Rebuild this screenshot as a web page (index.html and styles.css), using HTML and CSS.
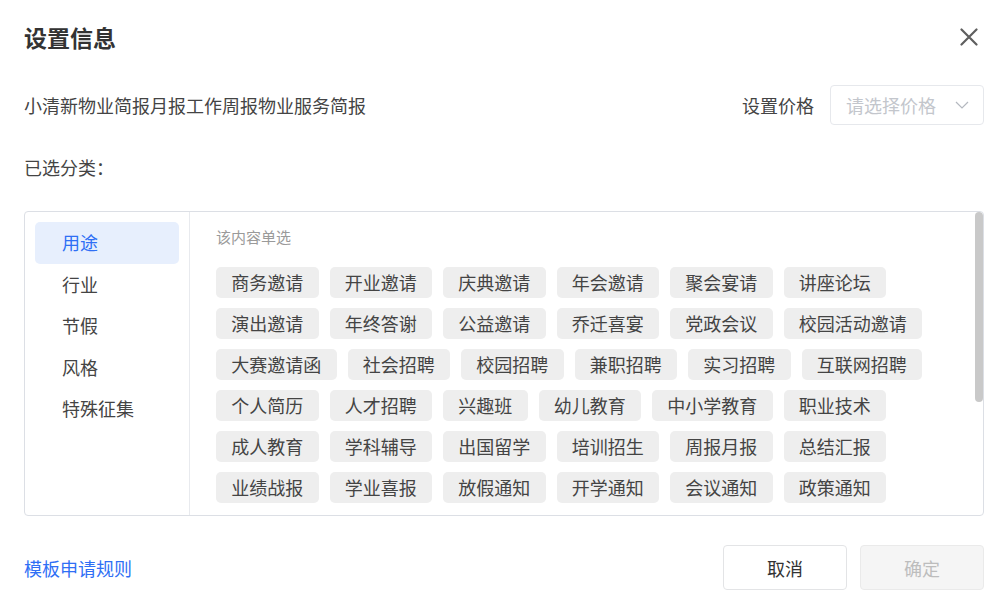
FILE: index.html
```html
<!DOCTYPE html>
<html lang="zh-CN">
<head>
    <meta charset="UTF-8">
    <meta name="viewport" content="width=device-width, initial-scale=1.0">
    <title>设置信息</title>
    <link rel="stylesheet" href="styles.css">
</head>
<body>
    <div class="dialog">
        <div class="dialog-header">
            <h2 class="dialog-title">设置信息</h2>
            <button class="close-btn" type="button" aria-label="关闭">
                <svg width="18" height="18" viewBox="0 0 18 18">
                    <path d="M1.5 1.5 L16.5 16.5 M16.5 1.5 L1.5 16.5" stroke="#5f5f5f" stroke-width="2.2" fill="none" stroke-linecap="round"/>
                </svg>
            </button>
        </div>

        <div class="info-row">
            <span class="template-name">小清新物业简报月报工作周报物业服务简报</span>
            <div class="price-field">
                <label class="price-label">设置价格</label>
                <div class="select">
                    <span class="select-placeholder">请选择价格</span>
                    <svg class="select-arrow" width="14" height="8" viewBox="0 0 14 8">
                        <path d="M1 1 L7 7 L13 1" stroke="#b4b8bf" stroke-width="1.2" fill="none"/>
                    </svg>
                </div>
            </div>
        </div>

        <div class="selected-label">已选分类：</div>

        <div class="category-box">
            <ul class="category-nav">
                <li class="nav-item active">用途</li>
                <li class="nav-item">行业</li>
                <li class="nav-item">节假</li>
                <li class="nav-item">风格</li>
                <li class="nav-item">特殊征集</li>
            </ul>
            <div class="category-pane">
                <div class="pane-hint">该内容单选</div>
                <div class="tag-list">
                    <span class="tag">商务邀请</span>
                    <span class="tag">开业邀请</span>
                    <span class="tag">庆典邀请</span>
                    <span class="tag">年会邀请</span>
                    <span class="tag">聚会宴请</span>
                    <span class="tag">讲座论坛</span>
                    <span class="tag">演出邀请</span>
                    <span class="tag">年终答谢</span>
                    <span class="tag">公益邀请</span>
                    <span class="tag">乔迁喜宴</span>
                    <span class="tag">党政会议</span>
                    <span class="tag">校园活动邀请</span>
                    <span class="tag">大赛邀请函</span>
                    <span class="tag">社会招聘</span>
                    <span class="tag">校园招聘</span>
                    <span class="tag">兼职招聘</span>
                    <span class="tag">实习招聘</span>
                    <span class="tag">互联网招聘</span>
                    <span class="tag">个人简历</span>
                    <span class="tag">人才招聘</span>
                    <span class="tag">兴趣班</span>
                    <span class="tag">幼儿教育</span>
                    <span class="tag">中小学教育</span>
                    <span class="tag">职业技术</span>
                    <span class="tag">成人教育</span>
                    <span class="tag">学科辅导</span>
                    <span class="tag">出国留学</span>
                    <span class="tag">培训招生</span>
                    <span class="tag">周报月报</span>
                    <span class="tag">总结汇报</span>
                    <span class="tag">业绩战报</span>
                    <span class="tag">学业喜报</span>
                    <span class="tag">放假通知</span>
                    <span class="tag">开学通知</span>
                    <span class="tag">会议通知</span>
                    <span class="tag">政策通知</span>
                </div>
            </div>
            <!-- 滚动条 -->
            <div class="scroll-thumb"></div>
        </div>

        <div class="dialog-footer">
            <a class="rule-link" href="#">模板申请规则</a>
            <div class="footer-actions">
                <button class="btn btn-cancel" type="button">取消</button>
                <button class="btn btn-confirm" type="button" disabled>确定</button>
            </div>
        </div>
    </div>
</body>
</html>
```

FILE: styles.css
```css
* {
    box-sizing: border-box;
}

body {
    margin: 0;
    background: #fff;
    color: #333;
    font-family: "Noto Sans CJK SC", "Noto Sans", sans-serif;
    font-size: 18px;
}

.dialog {
    width: 1000px;
    padding: 20px 16px 0 24px;
}

.dialog-header {
    display: flex;
    justify-content: space-between;
    align-items: center;
    height: 34px;
}

.dialog-title {
    margin: 0;
    font-size: 23px;
    font-weight: bold;
    color: #333;
    line-height: 34px;
}

.close-btn {
    border: none;
    background: none;
    padding: 0;
    margin-right: 6px;
    width: 18px;
    height: 18px;
    cursor: pointer;
}

.info-row {
    display: flex;
    justify-content: space-between;
    align-items: center;
    margin-top: 31px;
    height: 40px;
}

.template-name {
    color: #444;
}

.price-field {
    display: flex;
    align-items: center;
    gap: 16px;
}

.price-label {
    color: #444;
}

.select {
    width: 154px;
    height: 40px;
    border: 1px solid #e6e8ec;
    border-radius: 4px;
    padding: 0 14px 0 15px;
    display: flex;
    align-items: center;
    justify-content: space-between;
}

.select-placeholder {
    color: #c3c6cc;
}

.selected-label {
    margin-top: 30px;
    line-height: 24px;
    color: #444;
}

.category-box {
    position: relative;
    margin-top: 32px;
    height: 305px;
    border: 1px solid #dcdfe5;
    border-radius: 4px;
    display: flex;
    overflow: hidden;
}

.category-nav {
    list-style: none;
    margin: 0;
    padding: 10px 10px 0 10px;
    width: 165px;
    flex-shrink: 0;
    border-right: 1px solid #e8eaee;
}

.nav-item {
    height: 41.5px;
    line-height: 41.5px;
    padding-left: 27px;
    border-radius: 5px;
    color: #444;
    cursor: pointer;
}

.nav-item.active {
    background: #e7effd;
    color: #2f6ff5;
}

.category-pane {
    flex: 1;
    overflow: hidden;
    padding: 14px 28px 0 26px;
}

.scroll-thumb {
    position: absolute;
    top: 0;
    right: 0;
    width: 8px;
    height: 190px;
    background: #c9c9c9;
    border-radius: 4px;
}

.pane-hint {
    font-size: 15px;
    line-height: 22px;
    color: #9a9a9a;
    margin-bottom: 19px;
}

.tag-list {
    display: flex;
    flex-wrap: wrap;
    gap: 10px 11px;
}

.tag {
    height: 31px;
    line-height: 31px;
    padding: 0 15.25px;
    background: #eeeeee;
    border-radius: 5px;
    color: #444;
    white-space: nowrap;
    cursor: pointer;
}

.dialog-footer {
    display: flex;
    justify-content: space-between;
    align-items: center;
    margin-top: 29px;
}

.rule-link {
    color: #2f6ff5;
    text-decoration: none;
}

.footer-actions {
    display: flex;
    gap: 13px;
}

.btn {
    width: 124px;
    height: 45px;
    border-radius: 4px;
    font-family: inherit;
    font-size: 18px;
    cursor: pointer;
}

.btn-cancel {
    background: #fff;
    border: 1px solid #e3e4e6;
    color: #333;
}

.btn-confirm {
    background: #f5f5f5;
    border: 1px solid #eaeaea;
    color: #bdbdbd;
    cursor: not-allowed;
}
```
